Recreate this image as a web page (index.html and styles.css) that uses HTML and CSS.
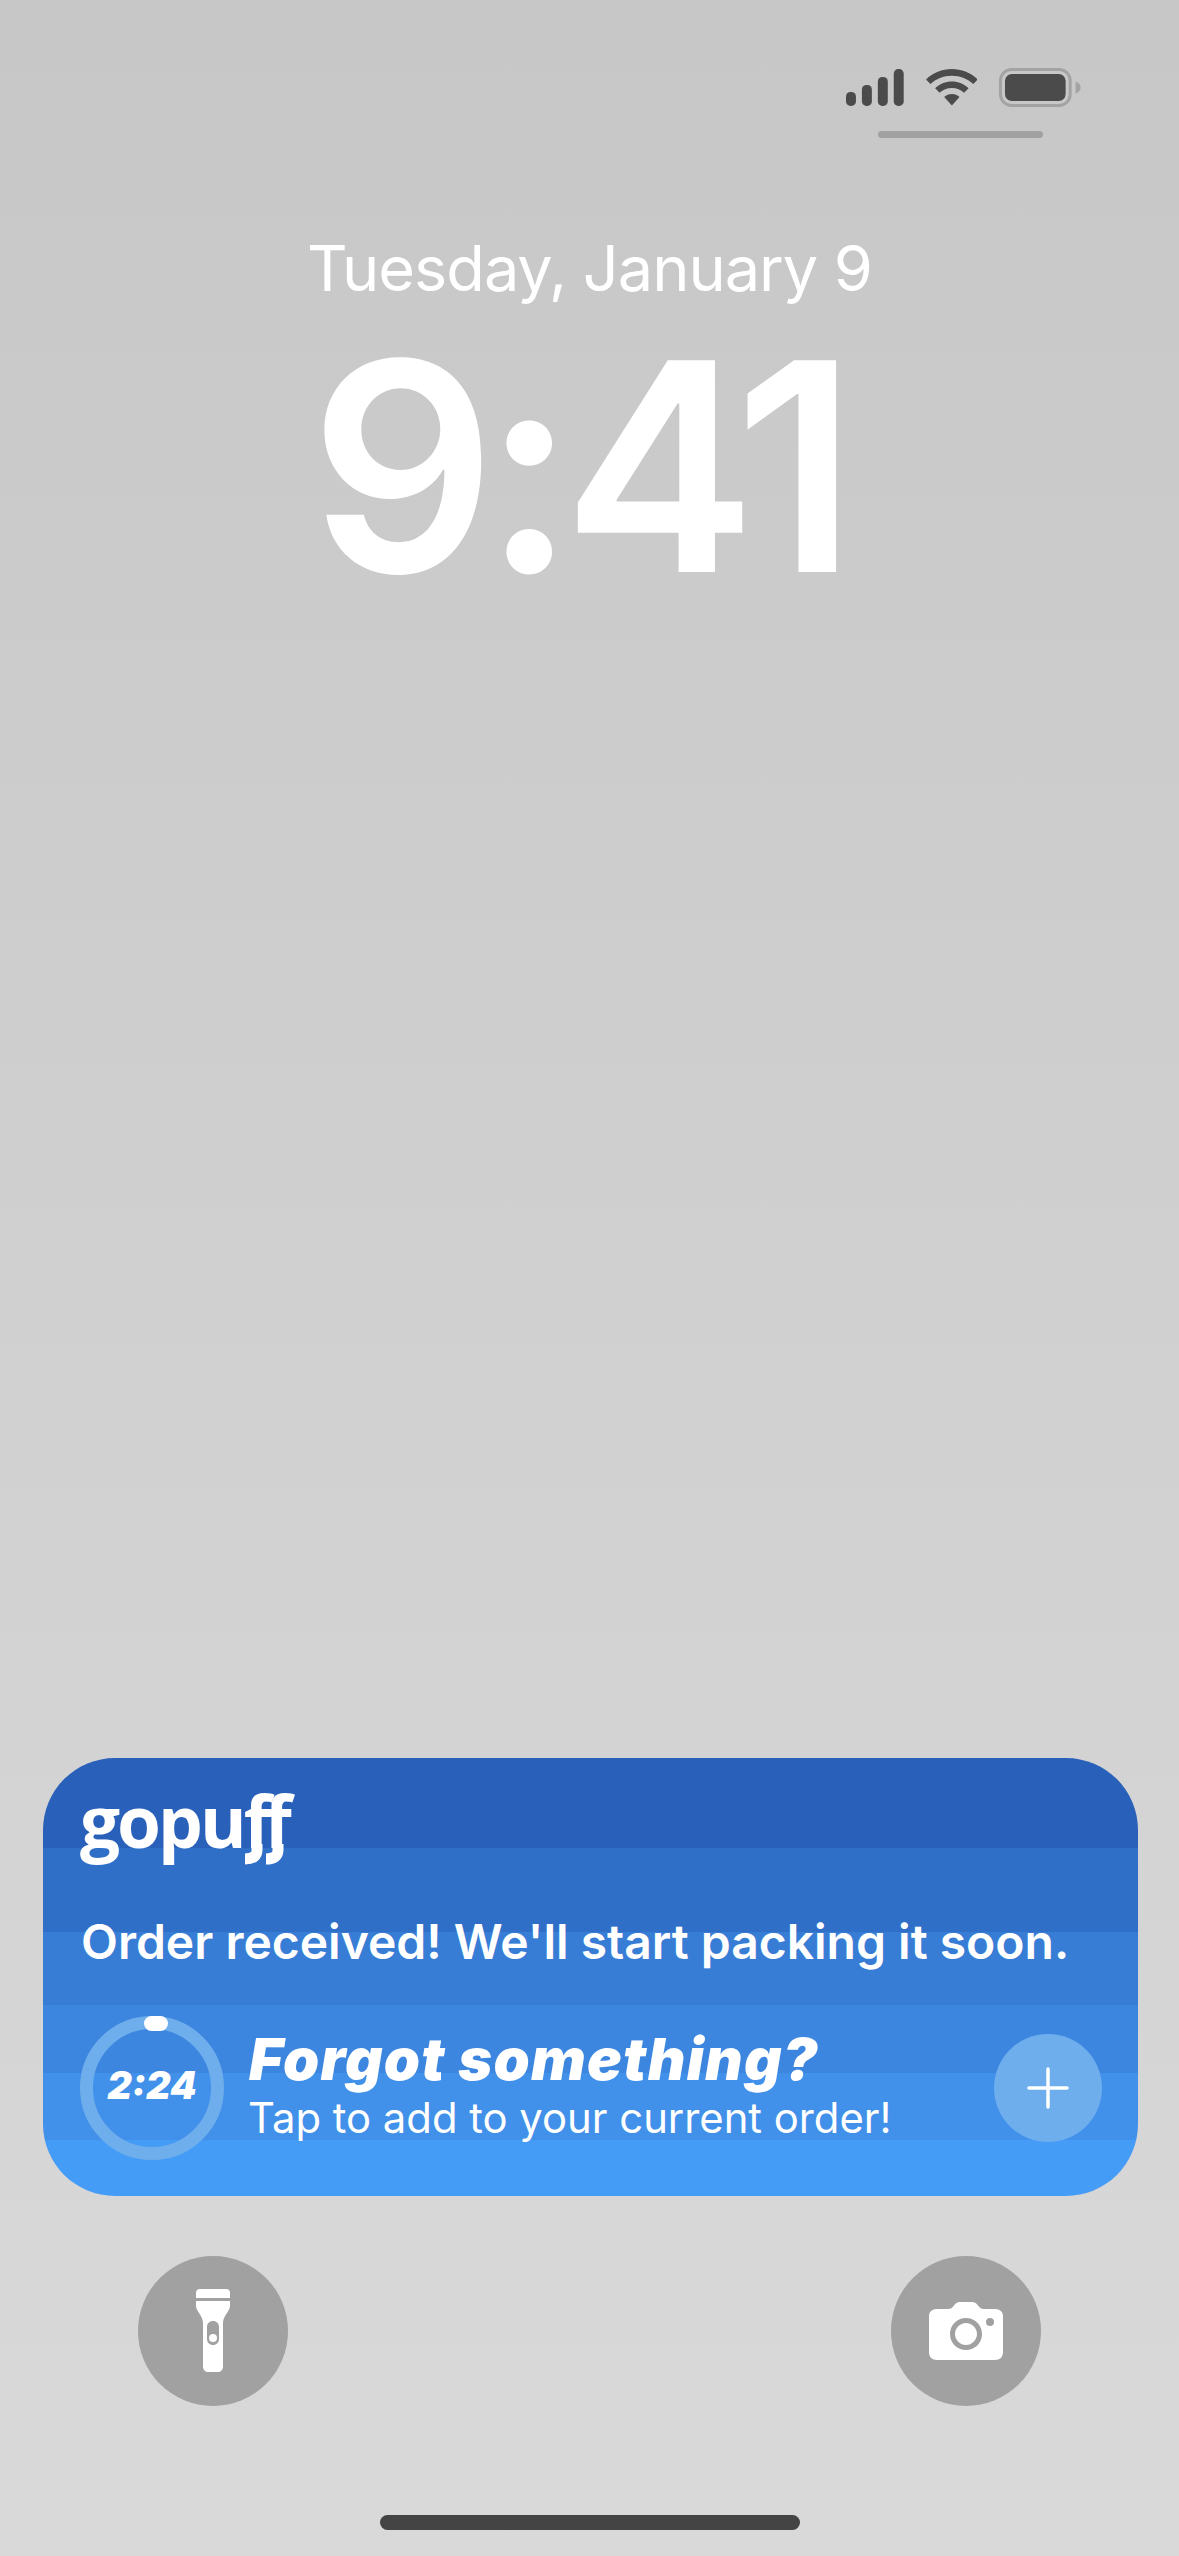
FILE: index.html
```html
<!DOCTYPE html>
<html lang="en">
<head>
<meta charset="utf-8">
<title>Lock Screen</title>
<link rel="stylesheet" href="styles.css">
</head>
<body>
<main class="screen">
  <header class="status">
    <div class="status-icons">
      <svg class="signal" width="58" height="37" viewBox="0 0 58 37"><rect x="0" y="23" width="10" height="14" rx="4.5"/><rect x="16" y="16" width="10" height="21" rx="4.5"/><rect x="32" y="8" width="10" height="29" rx="4.5"/><rect x="48" y="0" width="10" height="37" rx="4.5"/></svg>
      <svg class="wifi" width="52" height="37" viewBox="0 0 52 37"><path d="M26 0C16 0 7 3.800 0 10.500L4.500 15C10 9.800 17.500 6.600 26 6.600S42 9.800 47.500 15L52 10.500C45 3.800 36 0 26 0Z"/><path d="M26 12.500C19.500 12.500 13.600 15 9.200 19.300L13.700 23.800C17 20.700 21.300 18.900 26 18.900S35 20.700 38.300 23.800L42.800 19.300C38.400 15 32.500 12.500 26 12.500Z"/><path d="M26 25C23 25 20.300 26 18.300 28.100L26 36.500L33.700 28.100C31.700 26 29 25 26 25Z"/></svg>
      <svg class="battery" width="82" height="39" viewBox="0 0 82 39"><rect x="1.500" y="1.500" width="70" height="36" rx="11" class="battery-shell"/><rect x="6" y="6" width="61" height="27" rx="7" class="battery-fill"/><path d="M77 13.500C80 14.500 82 16.500 82 19.500S80 24.500 77 25.500Z" class="battery-nub"/></svg>
    </div>
    <div class="status-line"></div>
  </header>

  <section class="clock">
    <div class="date">Tuesday, January 9</div>
    <div class="time">9:41</div>
  </section>

  <section class="activity">
    <div class="logo">gopu<span class="logo-ff">ff<svg class="logo-hooks" width="56" height="26" viewBox="0 0 56 26"><path d="M23 0V6C23 12 19 15 11 15M44 0V6C44 12 40 15 32 15"/></svg></span></div>
    <p class="message">Order received! We'll start packing it soon.</p>
    <div class="promo">
      <div class="timer">
        <svg class="ring" width="144" height="144" viewBox="0 0 144 144"><circle cx="72" cy="72" r="65.500"/></svg>
        <span class="handle"></span>
        <span class="timer-text">2:24</span>
      </div>
      <div class="promo-copy">
        <div class="promo-title">Forgot something?</div>
        <div class="promo-sub">Tap to add to your current order!</div>
      </div>
      <div class="add">
        <svg width="42" height="42" viewBox="0 0 42 42"><path d="M21 2V40M2 21H40"/></svg>
      </div>
    </div>
  </section>

  <section class="actions">
    <div class="round">
      <svg width="36" height="84" viewBox="0 0 36 84"><path fill-rule="evenodd" d="M5 0H31C34 0 35 2 35 4V9H1V4C1 2 2 0 5 0ZM1 12H35V17C35 22 28 27 28 34V77C28 81 26 83 22 83H14C10 83 8 81 8 77V34C8 27 1 22 1 17ZM18 32C14.500 32 12 34.500 12 38V50C12 53.500 14.500 56 18 56S24 53.500 24 50V38C24 34.500 21.500 32 18 32Z"/><circle cx="18" cy="49" r="4"/></svg>
    </div>
    <div class="round">
      <svg width="74" height="58" viewBox="0 0 74 58"><path fill-rule="evenodd" d="M8 7H19C22 7 23 6 25 3.500C26.500 1.500 28 0 32 0H42C46 0 47.500 1.500 49 3.500C51 6 52 7 55 7H66C71 7 74 10 74 14V50C74 55 71 58 66 58H8C3 58 0 55 0 50V14C0 10 3 7 8 7ZM37 16C28 16 21 23 21 32S28 48 37 48S53 41 53 32S46 16 37 16ZM37 21C43 21 48 26 48 32S43 43 37 43S26 38 26 32S31 21 37 21ZM61 16A4 4 0 1 0 61 24A4 4 0 1 0 61 16Z"/></svg>
    </div>
  </section>

  <div class="home-indicator"></div>
</main>
</body>
</html>
```

FILE: styles.css
```css
* { box-sizing: border-box; }

html, body {
  margin: 0;
  padding: 0;
}

.screen {
  width: 1179px;
  height: 2556px;
  overflow: hidden;
  display: flex;
  flex-direction: column;
  align-items: center;
  background: linear-gradient(180deg, #c7c7c7 0%, #d9d9d9 100%);
  font-family: Inter, "Liberation Sans", sans-serif;
  color: #fff;
}

.status {
  align-self: flex-end;
  width: 235px;
  margin-right: 98px;
  padding-top: 68px;
  display: flex;
  flex-direction: column;
}

.status-icons {
  display: flex;
  align-items: flex-start;
  gap: 22px;
  height: 39px;
}

.signal, .wifi { margin-top: 1px; fill: #4b4b4b; }
.battery-shell { fill: none; stroke: #a3a3a3; stroke-width: 3; }
.battery-fill { fill: #4b4b4b; }
.battery-nub { fill: #a3a3a3; }

.status-line {
  width: 165px;
  height: 7px;
  margin: 24px 0 0 32px;
  border-radius: 3.500px;
  background: #a1a1a1;
}

.clock {
  margin-top: 92px;
  display: flex;
  flex-direction: column;
  align-items: center;
}

.date {
  font-size: 63px;
  line-height: 76px;
  font-weight: 400;
  letter-spacing: -1px;
}

.time {
  font-size: 291px;
  line-height: 276px;
  margin: 22px 25px 0 0;
  font-weight: 600;
  letter-spacing: -13px;
}

.activity {
  width: 1095px;
  height: 438px;
  margin: auto 0 0 2px;
  padding: 21px 36px 0 37px;
  border-radius: 72px;
  background: linear-gradient(180deg,
    #2860ba 0, #2860ba 90px,
    #2f6fc8 90px, #2f6fc8 174px,
    #377dd6 174px, #377dd6 247px,
    #3c86e0 247px, #3c86e0 315px,
    #4190e9 315px, #4190e9 382px,
    #459cf6 382px, #459cf6 100%);
}

.logo {
  width: max-content;
  font-family: "Open Sans", sans-serif;
  font-size: 71px;
  line-height: 84px;
  font-weight: 700;
  letter-spacing: -3px;
}

.logo-ff {
  position: relative;
  letter-spacing: -7px;
}

.logo-hooks {
  position: absolute;
  left: -10px;
  top: 72px;
  fill: none;
  stroke: #fff;
  stroke-width: 11;
}

.message {
  margin: 49px 0 0 1px;
  font-size: 48px;
  line-height: 60px;
  font-weight: 600;
  white-space: nowrap;
}

.promo {
  margin-top: 44px;
  display: flex;
  align-items: center;
}

.timer {
  position: relative;
  width: 144px;
  height: 144px;
  flex: none;
  display: flex;
  align-items: center;
  justify-content: center;
}

.ring {
  position: absolute;
  inset: 0;
  fill: none;
  stroke: #6eaeec;
  stroke-width: 13;
}

.handle {
  position: absolute;
  left: 64px;
  top: 0;
  width: 24px;
  height: 15px;
  border-radius: 8px;
  background: #fff;
}

.timer-text {
  position: relative;
  padding-bottom: 6px;
  font-size: 38px;
  font-weight: 900;
  font-style: italic;
}

.promo-copy {
  margin-left: 25px;
  padding-bottom: 6px;
  flex: 1;
  white-space: nowrap;
}

.promo-title {
  font-size: 58px;
  line-height: 64px;
  font-weight: 900;
  font-style: italic;
  letter-spacing: 1.200px;
}

.promo-sub {
  margin: 1px 0 0 -1px;
  font-size: 41.800px;
  line-height: 52px;
  font-weight: 400;
}

.add {
  width: 108px;
  height: 108px;
  flex: none;
  border-radius: 50%;
  background: #6eaeec;
  display: flex;
  align-items: center;
  justify-content: center;
}

.add svg {
  fill: none;
  stroke: #fff;
  stroke-width: 3.500;
  stroke-linecap: round;
}

.actions {
  width: 903px;
  margin-top: 60px;
  display: flex;
  justify-content: space-between;
}

.round {
  width: 150px;
  height: 150px;
  border-radius: 50%;
  background: #a1a1a1;
  display: flex;
  align-items: center;
  justify-content: center;
}

.round svg { fill: #fff; }

.home-indicator {
  width: 420px;
  height: 15px;
  margin-top: 109px;
  margin-bottom: 26px;
  border-radius: 8px;
  background: #444;
}
```
